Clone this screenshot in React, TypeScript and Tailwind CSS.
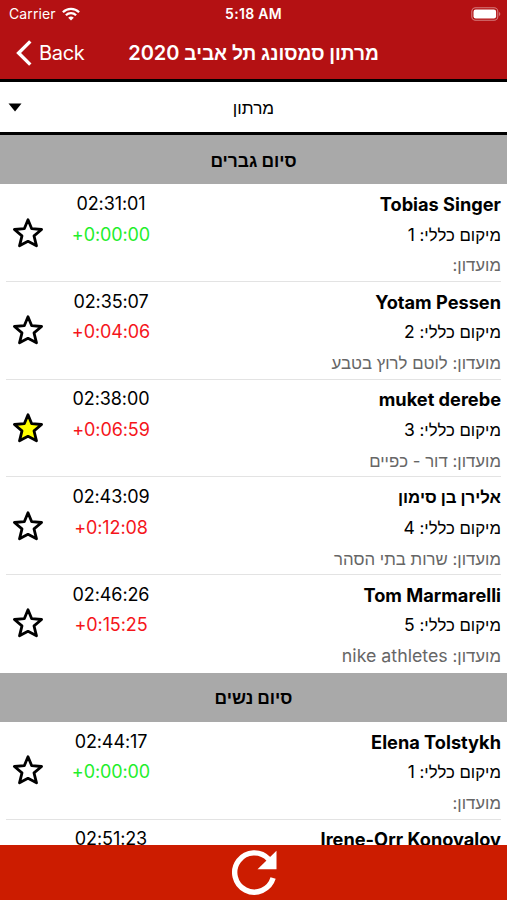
import clsx from 'clsx';

interface Runner {
  name: string;
  time: string;
  gap?: string;
  place?: number;
  club?: string;
  starred?: boolean;
}

interface Section {
  title: string;
  runners: Runner[];
}

const sections: Section[] = [
  {
    title: 'סיום גברים',
    runners: [
      { name: 'Tobias Singer', time: '02:31:01', gap: '+0:00:00', place: 1 },
      { name: 'Yotam Pessen', time: '02:35:07', gap: '+0:04:06', place: 2, club: 'לוטם לרוץ בטבע' },
      { name: 'muket derebe', time: '02:38:00', gap: '+0:06:59', place: 3, club: 'דור - כפיים', starred: true },
      { name: 'אלירן בן סימון', time: '02:43:09', gap: '+0:12:08', place: 4, club: 'שרות בתי הסהר' },
      { name: 'Tom Marmarelli', time: '02:46:26', gap: '+0:15:25', place: 5, club: 'nike athletes' },
    ],
  },
  {
    title: 'סיום נשים',
    runners: [
      { name: 'Elena Tolstykh', time: '02:44:17', gap: '+0:00:00', place: 1 },
      { name: 'Irene-Orr Konovalov', time: '02:51:23' },
    ],
  },
];

const isLatin = (text = '') => /^[a-z]/i.test(text);

function StatusBar() {
  return (
    <div className="flex h-[28px] items-center justify-between pr-[6px] pb-[1px] pl-[9px]">
      <div className="flex flex-1 items-center gap-[6px]">
        <span className="text-[14px] tracking-[0.1px]">Carrier</span>
        <svg viewBox="0 0 18 14" className="h-[14px] w-[18px]" fill="none" stroke="currentColor" strokeWidth="2.3">
          <path d="M.9 5.2a11.6 11.6 0 0 1 16.2 0" />
          <path d="M3.9 8.3a7.3 7.3 0 0 1 10.2 0" />
          <path d="M9 13.6 6.2 10.8a4 4 0 0 1 5.6 0z" fill="currentColor" stroke="none" />
        </svg>
      </div>
      <span className="pr-[3px] text-[14px] font-semibold tracking-[0.3px]">5:18 AM</span>
      <div className="flex flex-1 justify-end">
        <svg viewBox="0 0 30 14" className="h-[14px] w-[30px]">
          <rect x=".8" y=".8" width="26" height="12.4" rx="3.8" fill="none" stroke="#fff" strokeOpacity=".45" strokeWidth="1.1" />
          <rect x="2.5" y="2.5" width="22.6" height="9" rx="2.2" fill="#fff" />
          <path d="M28.2 5v4c1.4-.6 1.4-3.4 0-4z" fill="#fff" fillOpacity=".5" />
        </svg>
      </div>
    </div>
  );
}

function NavBar() {
  return (
    <div className="relative flex h-[51px] items-center justify-center">
      <button className="absolute top-[10px] left-[15px] flex items-center gap-[7px] text-[20px]">
        <svg viewBox="0 0 17 26" className="h-[26px] w-[17px]" fill="none" stroke="currentColor" strokeWidth="3.4">
          <path d="M15.3 1.4 3.6 13l11.7 11.6" />
        </svg>
        <span className="tracking-[-0.3px]">Back</span>
      </button>
      <h1 dir="rtl" className="pb-[2px] text-[19.1px] font-semibold">
        מרתון סמסונג תל אביב <span className="text-[20px]">2020</span>
      </h1>
    </div>
  );
}

function Star({ filled }: { filled?: boolean }) {
  return (
    <svg
      viewBox="0 0 32 32"
      className={clsx('h-[32px] w-[32px] stroke-black', filled ? 'fill-[#ffff00]' : 'fill-white')}
      strokeWidth="2.8"
      strokeLinejoin="round"
    >
      <path d="M16 2.8 19.7 11.7 29.6 12.5 22 18.8 24.5 28.8 16 24.3 7.5 28.8 10 18.8 2.4 12.5 12.3 11.7Z" />
    </svg>
  );
}

function RunnerRow({ runner, last }: { runner: Runner; last: boolean }) {
  const leader = runner.gap === '+0:00:00';
  return (
    <li className="flex h-[97.7px] shrink-0 px-[6px]">
      <div className={clsx('flex flex-1 border-b', last ? 'border-transparent' : 'border-[#e3e3e3]')}>
        <div className="flex w-[44px] items-center pl-[6px]">
          <Star filled={runner.starred} />
        </div>
        <div className="w-[122px] pt-[4.7px] text-center text-[18px] leading-[30.8px] tracking-[-0.1px]">
          <p>{runner.time}</p>
          {runner.gap && <p className={leader ? 'text-[#1fee2c]' : 'text-[#f5151b]'}>{runner.gap}</p>}
        </div>
        <div dir="rtl" className="flex-1 pt-[4.7px] text-[16.8px] leading-[30.8px]">
          <p className={clsx('h-[30.8px] font-bold', isLatin(runner.name) && 'text-[18.2px]')}>{runner.name}</p>
          {runner.place && (
            <>
              <p className="h-[30.8px]">
                מיקום כללי: <span className="text-[17.5px]">{runner.place}</span>
              </p>
              <p className="h-[30.8px] text-[#666]">
                מועדון: <span className={clsx(isLatin(runner.club) && 'text-[17.8px]')}>{runner.club}</span>
              </p>
            </>
          )}
        </div>
      </div>
    </li>
  );
}

function RefreshBar() {
  return (
    <footer className="flex h-[55px] shrink-0 justify-center bg-[#cc1c00] pt-[4px]">
      <svg viewBox="0 0 47 48" className="h-[48px] w-[47px]">
        <path d="M43.1 29.1A19.6 19.6 0 1 1 38.8 10.3" fill="none" stroke="#fff" strokeWidth="5.4" />
        <path d="M46.5 1.7V20.3H27.5Z" fill="#fff" />
      </svg>
    </footer>
  );
}

export default function App() {
  return (
    <div className="flex h-[900px] w-[507px] flex-col overflow-hidden bg-white font-['Inter','Liberation_Sans',sans-serif] text-black">
      <header className="shrink-0 bg-[#b41113] text-white">
        <StatusBar />
        <NavBar />
      </header>
      <div className="flex h-[56px] shrink-0 items-center border-y-[3px] border-black px-[8px] pt-[1px]">
        <svg viewBox="0 0 14 9" className="h-[9px] w-[14px]">
          <path d="M.5.5h13L7 8.5z" />
        </svg>
        <span className="flex-1 pr-[14px] text-center text-[17.2px]">מרתון</span>
      </div>
      <main className="min-h-0 flex-1 overflow-hidden">
        {sections.map((section) => (
          <section key={section.title}>
            <h2 className="flex h-[49.2px] items-center justify-center bg-[#a9a9a9] pt-[2px] text-[17.4px] font-bold">
              {section.title}
            </h2>
            <ul>
              {section.runners.map((runner, i) => (
                <RunnerRow key={runner.name} runner={runner} last={i === section.runners.length - 1} />
              ))}
            </ul>
          </section>
        ))}
      </main>
      <RefreshBar />
    </div>
  );
}
